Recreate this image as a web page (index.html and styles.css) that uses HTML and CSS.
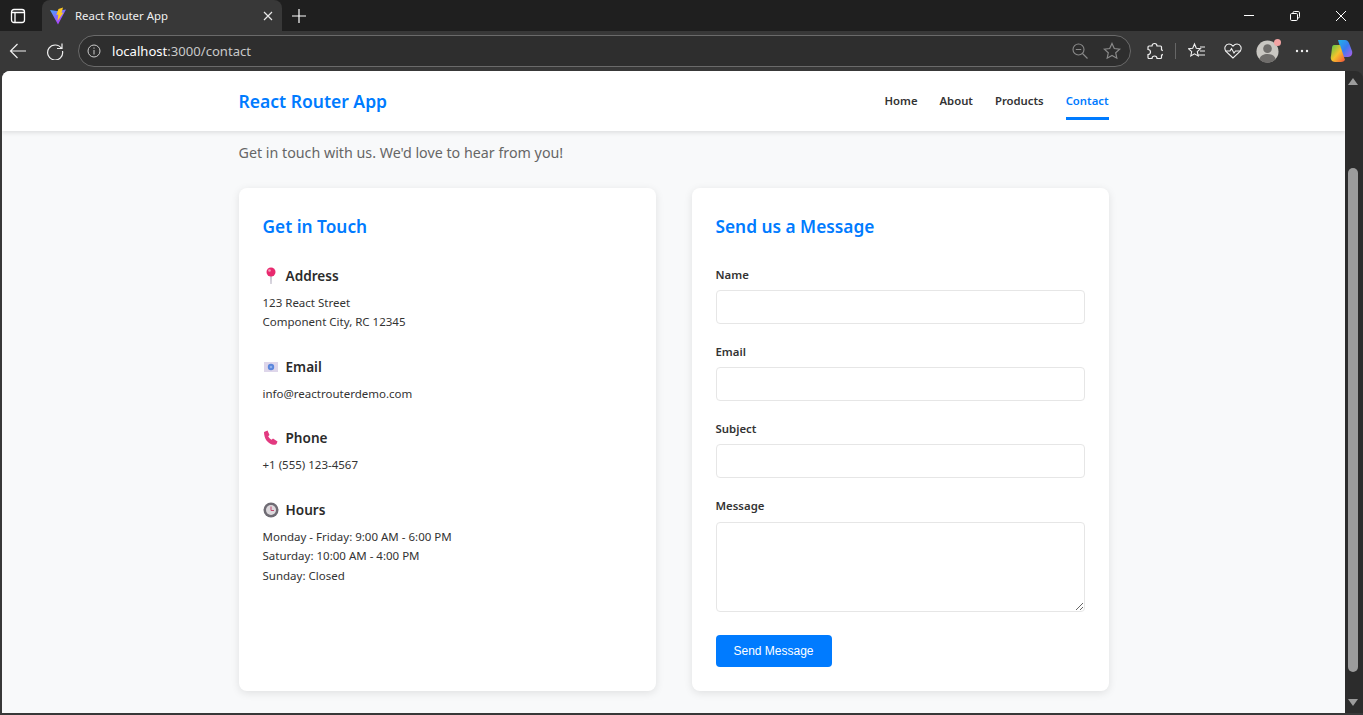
FILE: index.html
```html
<!DOCTYPE html>
<html>
    <head>
        <title>React Router App</title>
        <meta charset="UTF-8">
        <link rel="stylesheet" href="styles.css">
    </head>
    <body>
        <!-- browser tab strip -->
        <div class="tabstrip">
            <div class="tabs-btn">
                <svg width="18" height="18" viewBox="0 0 18 18" fill="none" stroke="#fff" stroke-width="1.300"><rect x="2.500" y="2.500" width="13" height="13" rx="2.500"/><path d="M2.500 5.500h13M6 5.500v10"/></svg>
            </div>
            <div class="tab">
                <svg class="favicon" width="18" height="18" viewBox="0 0 18 18">
                    <defs>
                        <linearGradient id="vite" x1="0" y1="0" x2="0.700" y2="1"><stop offset="0" stop-color="#41a8ff"/><stop offset="1" stop-color="#bd34fe"/></linearGradient>
                    </defs>
                    <path d="M1 3l7 1 9-1.500L9 17.500z" fill="url(#vite)"/>
                    <path d="M9.500 2l4.500-1.500-1.500 5.500 2-.5L8.500 14l.8-6.500-2 .5z" fill="#ffc824"/>
                </svg>
                <span class="tab-title">React Router App</span>
                <svg width="12" height="12" viewBox="0 0 12 12" stroke="#e8e8e8" stroke-width="1.200"><path d="M2 2l8 8M10 2l-8 8"/></svg>
            </div>
            <div class="new-tab">
                <svg width="16" height="16" viewBox="0 0 16 16" stroke="#fff" stroke-width="1.200"><path d="M8 1v14M1 8h14"/></svg>
            </div>
            <div class="window-btns">
                <svg width="12" height="12" viewBox="0 0 12 12" stroke="#fff" stroke-width="1"><path d="M1 5.500h10"/></svg>
                <svg width="12" height="12" viewBox="0 0 12 12" fill="none" stroke="#fff" stroke-width="1"><rect x="1.500" y="3.500" width="7" height="7" rx="1.200"/><path d="M4 3.500V2.800a1.300 1.300 0 0 1 1.300-1.300h3.900a1.300 1.300 0 0 1 1.300 1.300v3.900a1.300 1.300 0 0 1-1.300 1.300h-.7"/></svg>
                <svg width="12" height="12" viewBox="0 0 12 12" stroke="#fff" stroke-width="1"><path d="M1 1l10 10M11 1L1 11"/></svg>
            </div>
        </div>

        <!-- browser toolbar -->
        <div class="toolbar">
            <svg class="nav-icon" width="18" height="18" viewBox="0 0 18 18" fill="none" stroke="#f0f0f0" stroke-width="1.200"><path d="M17 9H1.500M8.500 2L1.500 9l7 7"/></svg>
            <svg class="nav-icon reload" width="18" height="18" viewBox="0 0 18 18" fill="none" stroke="#f0f0f0" stroke-width="1.200"><path d="M15.500 6.500A7.500 7.500 0 1 0 16.500 9M16 1.500v5h-5"/></svg>
            <div class="addressbar">
                <svg width="14" height="14" viewBox="0 0 14 14" fill="none" stroke="#ccc" stroke-width="1"><circle cx="7" cy="7" r="6"/><path d="M7 6v4.500M7 3.500v1.200"/></svg>
                <span class="url"><span class="url-host">localhost</span>:3000/contact</span>
                <svg class="zoom-icon" width="16" height="16" viewBox="0 0 16 16" fill="none" stroke="#8a8a8a" stroke-width="1.100"><circle cx="6.500" cy="6.500" r="5.500"/><path d="M3.800 6.500h5.400M10.500 10.500l5 5"/></svg>
                <svg width="18" height="18" viewBox="0 0 18 18" fill="none" stroke="#8a8a8a" stroke-width="1.200"><path d="M9 1.500l2.300 5 5.400.6-4 3.700 1.100 5.400L9 13.500l-4.800 2.700 1.100-5.400-4-3.700 5.400-.6z"/></svg>
            </div>
            <svg class="tool ext" width="16" height="18" viewBox="0 0 16 18" fill="none" stroke="#f0f0f0" stroke-width="1.200"><path d="M5 4a2.500 2.500 0 0 1 5 0h3.500a1 1 0 0 1 1 1v3a2.500 2.500 0 0 1 0 5v2.500a1 1 0 0 1-1 1H10a2.500 2.500 0 0 0-5 0H2a1 1 0 0 1-1-1V12.500a2.500 2.500 0 0 0 0-5V5a1 1 0 0 1 1-1z"/></svg>
            <div class="tool-sep"></div>
            <svg class="tool fav" width="18" height="18" viewBox="0 0 18 18" fill="none" stroke="#f0f0f0" stroke-width="1.100"><path d="M6.500 2l1.800 4.200 4.200.5-3.200 3 .9 4.300-3.700-2.200L2.800 14l.9-4.300-3.200-3 4.200-.5zM12 5h5M12 9h5M10.500 13H17"/></svg>
            <svg class="tool health" width="18" height="18" viewBox="0 0 18 18" fill="none" stroke="#f0f0f0" stroke-width="1.100"><path d="M9 16L2 9.500C-.5 6 1.500 2 5 2c1.800 0 3 1 4 2.200C10 3 11.200 2 13 2c3.500 0 5.500 4 3 7.500z"/><path d="M1.500 9H6l1.500-2.500L10 11l1.500-2h5" /></svg>
            <div class="avatar">
                <svg width="23" height="23" viewBox="0 0 24 24"><circle cx="12" cy="12" r="11.500" fill="#c9c7c2"/><circle cx="12" cy="9" r="4.500" fill="#6f6d6b"/><path d="M3.500 20c1-4 4.500-5.500 8.500-5.500s7.500 1.500 8.500 5.500A11.500 11.500 0 0 1 3.500 20z" fill="#6f6d6b"/></svg>
                <span class="avatar-dot"></span>
            </div>
            <svg class="tool more" width="14" height="4" viewBox="0 0 14 4" fill="#f0f0f0"><circle cx="2" cy="2" r="1.200"/><circle cx="7" cy="2" r="1.200"/><circle cx="12" cy="2" r="1.200"/></svg>
            <svg class="tool copilot" width="24" height="24" viewBox="0 0 24 24">
                <defs>
                    <linearGradient id="cpa" x1="0" y1="0" x2="1" y2="1"><stop offset="0" stop-color="#1fb6e8"/><stop offset=".5" stop-color="#3a7bf0"/><stop offset="1" stop-color="#b35ce8"/></linearGradient>
                    <linearGradient id="cpb" x1="0" y1="0" x2="1" y2="1"><stop offset="0" stop-color="#4fc94a"/><stop offset=".5" stop-color="#f6c22c"/><stop offset="1" stop-color="#f2503a"/></linearGradient>
                </defs>
                <path d="M9 1h7c2 0 3 1 4 3l3 8c1 3-1 6-4 6h-5z" fill="url(#cpa)"/>
                <path d="M5 6h6l5 15c-1 1-2 2-4 2H6c-3 0-5-3-4-6l1-8c0-2 1-3 2-3z" fill="url(#cpb)"/>
            </svg>
        </div>

        <div class="viewport">
            <div class="page">
                <nav class="navbar">
                    <div class="container navbar-inner">
                        <a class="brand">React Router App</a>
                        <div class="nav-links">
                            <a class="nav-link">Home</a>
                            <a class="nav-link">About</a>
                            <a class="nav-link">Products</a>
                            <a class="nav-link active">Contact</a>
                        </div>
                    </div>
                </nav>
                <main class="container main">
                    <p class="lead">Get in touch with us. We'd love to hear from you!</p>
                    <div class="columns">
                        <section class="card">
                            <h2 class="card-title">Get in Touch</h2>
                            <div class="info">
                                <h3 class="info-title">
                                    <svg class="emoji" width="16" height="18" viewBox="0 0 16 18"><path d="M7.200 8h1.600l-.3 9h-1z" fill="#b9b4c4"/><circle cx="8" cy="5" r="4.500" fill="#e8296e"/><circle cx="6.500" cy="3.500" r="1.300" fill="#f79ab8"/></svg>
                                    Address
                                </h3>
                                <p>123 React Street<br>Component City, RC 12345</p>
                            </div>
                            <div class="info">
                                <h3 class="info-title">
                                    <svg class="emoji" width="16" height="18" viewBox="0 0 16 18"><rect x="1" y="4" width="14" height="10" fill="#ded6ea"/><circle cx="8" cy="9" r="3.200" fill="#5b86dc"/><circle cx="8" cy="9" r="1.300" fill="#8fb0ec"/></svg>
                                    Email
                                </h3>
                                <p>info@reactrouterdemo.com</p>
                            </div>
                            <div class="info">
                                <h3 class="info-title">
                                    <svg class="emoji" width="16" height="18" viewBox="0 0 16 18"><path d="M1 3l3.500-1.500 2 4.500-1.300 1.200c.7 1.500 1.800 2.700 3.300 3.500l1.500-1.200 4.500 3-1 2.500c-1.200 1-3 1-4.500.5C4.500 14 1 9.500 1 3z" fill="#e23a80"/></svg>
                                    Phone
                                </h3>
                                <p>+1 (555) 123-4567</p>
                            </div>
                            <div class="info">
                                <h3 class="info-title">
                                    <svg class="emoji" width="16" height="18" viewBox="0 0 16 18"><circle cx="8" cy="9" r="7.500" fill="#6f6c74"/><circle cx="8" cy="9" r="5" fill="#dcd8dc"/><path d="M8 5.500v4h3" fill="none" stroke="#c2476e" stroke-width="1"/></svg>
                                    Hours
                                </h3>
                                <p>Monday - Friday: 9:00 AM - 6:00 PM<br>Saturday: 10:00 AM - 4:00 PM<br>Sunday: Closed</p>
                            </div>
                        </section>
                        <section class="card">
                            <h2 class="card-title">Send us a Message</h2>
                            <form class="contact-form">
                                <label class="field-label">Name</label>
                                <input class="field" type="text">
                                <label class="field-label">Email</label>
                                <input class="field" type="email">
                                <label class="field-label">Subject</label>
                                <input class="field" type="text">
                                <label class="field-label">Message</label>
                                <textarea class="field field-area"></textarea>
                                <button class="submit" type="button">Send Message</button>
                            </form>
                        </section>
                    </div>
                </main>
            </div>
            <div class="scrollbar">
                <span class="arrow-up"></span>
                <div class="thumb"></div>
                <span class="arrow-down"></span>
            </div>
        </div>
    </body>
</html>
```

FILE: styles.css
```css
html, body {
    margin: 0;
    height: 715px;
    overflow: hidden;
}
body {
    display: flex;
    flex-direction: column;
    background-color: #383838;
    font-family: "Noto Sans", "Open Sans", sans-serif;
}

/* tab strip */
.tabstrip {
    display: flex;
    align-items: center;
    flex: 0 0 31px;
    background-color: #1f1f1f;
    color: #f0f0f0;
}
.tabs-btn {
    display: flex;
    justify-content: center;
    width: 36px;
    margin-right: 6px;
}
.tab {
    display: flex;
    align-items: center;
    box-sizing: border-box;
    width: 240px;
    height: 31px;
    padding: 0 8px 0 7px;
    background-color: #383838;
    border-radius: 8px 8px 0 0;
}
.tab-title {
    flex: 1;
    margin-left: 8px;
    font-size: 11.400px;
}
.new-tab {
    display: flex;
    margin-left: 9px;
}
.window-btns {
    display: flex;
    gap: 34px;
    margin-left: auto;
    margin-right: 16px;
}

/* toolbar */
.toolbar {
    display: flex;
    align-items: center;
    flex: 0 0 40px;
    background-color: #383838;
}
.nav-icon {
    margin-left: 9px;
}
.reload {
    margin-left: 19px;
}
.addressbar {
    display: flex;
    align-items: center;
    box-sizing: border-box;
    width: 1053px;
    height: 32px;
    margin-left: 14px;
    padding: 0 9px 0 8px;
    background-color: #2e2e2e;
    border: 1px solid #6a6a6a;
    border-radius: 16px;
}
.url {
    flex: 1;
    margin-left: 11px;
    font-size: 13.100px;
    color: #c9c9c9;
}
.url-host {
    color: #fff;
}
.zoom-icon {
    margin-right: 15px;
}
.ext {
    margin-left: 16px;
}
.tool-sep {
    width: 1px;
    height: 16px;
    margin-left: 12px;
    background-color: #666;
}
.fav {
    margin-left: 12px;
}
.health {
    margin-left: 18px;
}
.avatar {
    position: relative;
    display: flex;
    margin-left: 14px;
}
.avatar-dot {
    position: absolute;
    top: -1px;
    right: -2px;
    width: 7px;
    height: 7px;
    background-color: #f2a3a3;
    border-radius: 50%;
}
.more {
    margin-left: 16px;
}
.copilot {
    margin-left: 20px;
}

/* page area */
.viewport {
    display: flex;
    height: 642px;
    padding-left: 2px;
}
.page {
    flex: 1;
    overflow: hidden;
    background-color: #f8f9fa;
    border-top-left-radius: 8px;
    color: #212529;
}
.container {
    box-sizing: border-box;
    width: 870px;
    margin: 0 auto;
}
.navbar {
    position: relative;
    height: 60px;
    background-color: #fff;
    box-shadow: 0 2px 4px rgba(0, 0, 0, 0.1);
}
.navbar-inner {
    display: flex;
    align-items: center;
    justify-content: space-between;
    height: 60px;
}
.brand {
    font-size: 17.500px;
    font-weight: 600;
    color: #007bff;
}
.nav-links {
    display: flex;
    gap: 22px;
}
.nav-link {
    box-sizing: border-box;
    height: 38px;
    padding-top: 9px;
    font-size: 11.300px;
    font-weight: 600;
    line-height: 20px;
    color: #333;
    border-bottom: 3px solid transparent;
}
.nav-link.active {
    color: #007bff;
    border-bottom-color: #007bff;
}
.main {
    padding-top: 11px;
}
.lead {
    margin: 0 0 25px;
    font-size: 14.280px;
    line-height: 21px;
    color: #666;
}
.columns {
    display: grid;
    grid-template-columns: 417px 417px;
    gap: 36px;
}
.card {
    box-sizing: border-box;
    height: 503px;
    padding: 24px;
    background-color: #fff;
    border-radius: 8px;
    box-shadow: 0 2px 8px rgba(0, 0, 0, 0.1);
}
.card-title {
    margin: 0 0 24.800px;
    font-size: 17.300px;
    font-weight: 600;
    line-height: 29px;
    color: #007bff;
}
.info {
    margin-bottom: 25px;
}
.info-title {
    display: flex;
    align-items: center;
    gap: 7px;
    margin: 0 0 7px;
    font-size: 13.600px;
    font-weight: 600;
    line-height: 20px;
    color: #2b2b2b;
}
.emoji {
    flex: none;
}
.info p {
    margin: 0;
    font-size: 11.500px;
    line-height: 19.500px;
    color: #333;
}

/* form */
.contact-form {
    display: flex;
    flex-direction: column;
    align-items: flex-start;
}
.field-label {
    margin-bottom: 6px;
    font-size: 11.400px;
    font-weight: 600;
    line-height: 18px;
    color: #333;
}
.field {
    box-sizing: border-box;
    width: 100%;
    height: 34px;
    margin: 0 0 19.200px;
    background-color: #fff;
    border: 1px solid #e6e6e6;
    border-radius: 4px;
}
.field-area {
    height: 90px;
    margin-top: 1px;
    margin-bottom: 23px;
    resize: vertical;
}
.submit {
    width: 116px;
    height: 32px;
    padding: 0;
    font-family: "Liberation Sans", Arial, sans-serif;
    font-size: 12px;
    color: #fff;
    background-color: #007bff;
    border: none;
    border-radius: 4px;
}

/* scrollbar */
.scrollbar {
    position: relative;
    flex: 0 0 18px;
    background-color: #2c2c2c;
    border-top-right-radius: 8px;
}
.arrow-up, .arrow-down {
    position: absolute;
    left: 3px;
    border-left: 5px solid transparent;
    border-right: 5px solid transparent;
}
.arrow-up {
    top: 7px;
    border-bottom: 7px solid #9c9c9c;
}
.arrow-down {
    bottom: 7px;
    border-top: 7px solid #9c9c9c;
}
.thumb {
    position: absolute;
    top: 97px;
    left: 3px;
    width: 10px;
    height: 504px;
    background-color: #9c9c9c;
    border-radius: 5px;
}
```
